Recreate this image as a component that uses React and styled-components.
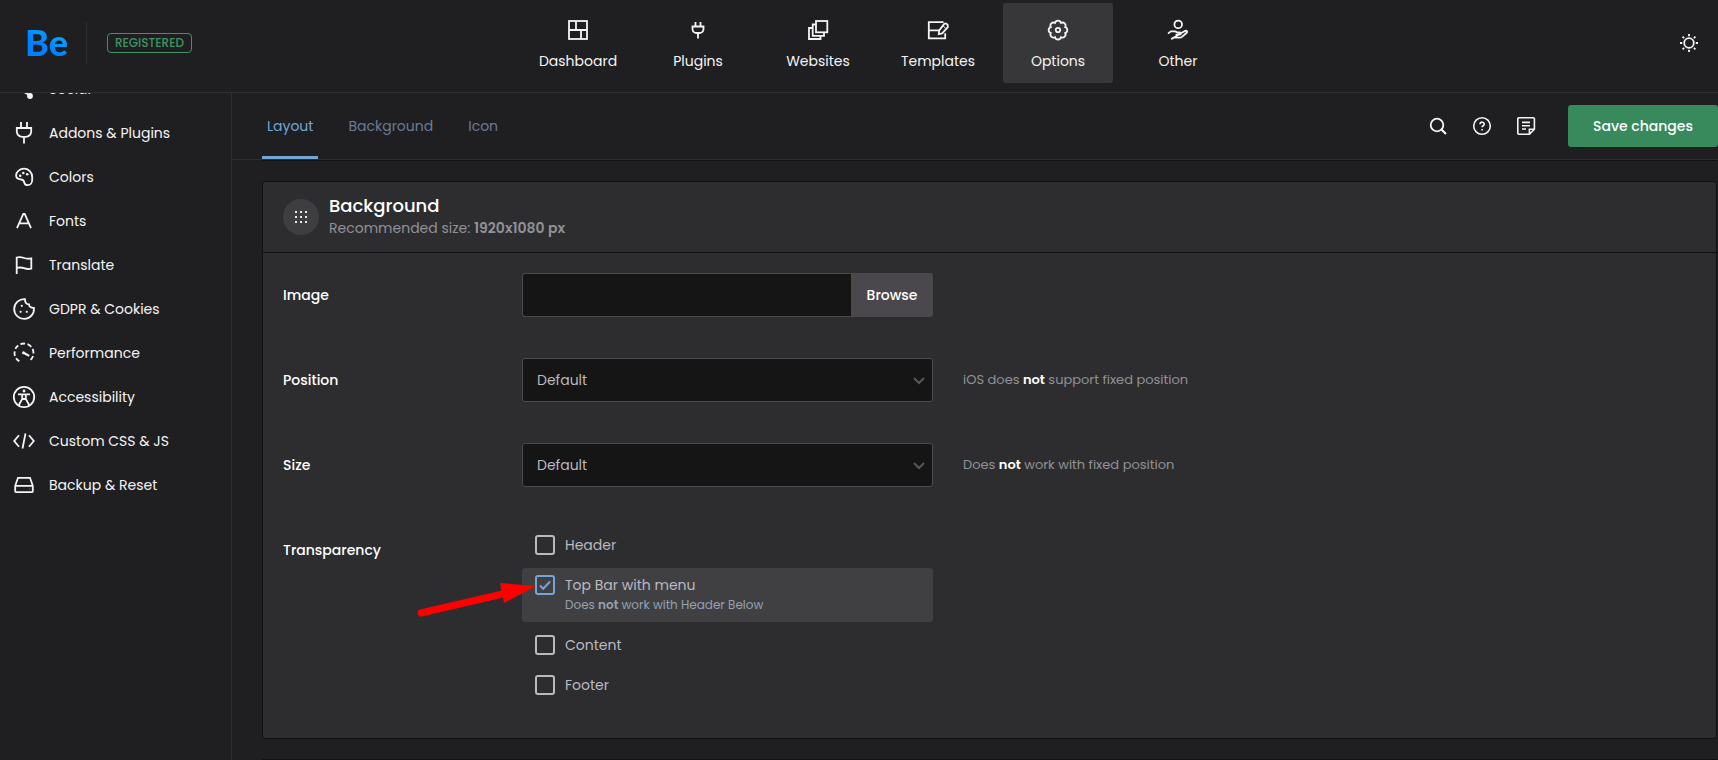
import React, { useState } from 'react';
import styled, { createGlobalStyle, css } from 'styled-components';

const GlobalStyle = createGlobalStyle`
	*,
	*::before,
	*::after {
		box-sizing: border-box;
	}
	body {
		margin: 0;
		background-color: #1f1f21;
		color: #f4f4f5;
		font-family: 'Poppins', 'Inter', sans-serif;
		font-size: 14px;
		line-height: 20px;
	}
	button,
	input,
	select {
		font: inherit;
	}
	h2,
	p,
	ul {
		margin: 0;
		padding: 0;
	}
`;

const icons = {
	dashboard: (
		<>
			<rect x='3' y='3' width='18' height='18' />
			<path d='M10 3v9M15 12v9M3 12h18' />
		</>
	),
	plugSmall: (
		<path d='M9.5 4v4M14.5 4v4M6.5 8.5h11v2.5a4 4 0 0 1-4 4h-3a4 4 0 0 1-4-4zM12 15v5.5' />
	),
	websites: (
		<>
			<rect x='10' y='3' width='11.3' height='11.3' />
			<path d='M10 6.5H6.7v11.3H18v-3.5M6.7 10H3v11h11.5v-3.2' />
		</>
	),
	templates: (
		<>
			<path d='M17.5 4.2H2.8v16.2h16.4v-5.2M2.8 12.3h10.5' />
			<path d='M18.4 5.6h2l1.4 1.6v2l-5.6 6.2-3.4.8.4-3.8z' />
			<path d='M16.8 7.6l2.8 2.6' strokeWidth='1' />
		</>
	),
	gear: (
		<>
			<path d='M9 4.900a3.100 3.100 0 0 1 6 0 3.100 3.100 0 0 1 4.200 4.200 3.100 3.100 0 0 1 0 5.900 3.100 3.100 0 0 1-4.200 4.200 3.100 3.100 0 0 1-6 0 3.100 3.100 0 0 1-4.200-4.200 3.100 3.100 0 0 1 0-5.900 3.100 3.100 0 0 1 4.200-4.200z' />
			<circle cx='12' cy='12' r='2.2' />
		</>
	),
	hand: (
		<>
			<circle cx='12.2' cy='6.4' r='3.8' />
			<path d='M2 15.6l2.9-2.2h4.4l2.2 1.1h2.200c1.600 0 1.600 2.200 0 2.200H9.600M14.800 15.200l4.400-2.300c1.700-.6 2.600.8 1.500 1.900l-5 4.300c-.6.5-1 .6-1.800.6H7.400l-2.200 1.600z' />
		</>
	),
	sun: (
		<>
			<circle cx='12' cy='12' r='4.8' />
			<path d='M12 3v2.200M12 18.800V21M3 12h2.200M18.800 12H21M5.600 5.600l1.500 1.500M16.900 16.900l1.500 1.500M5.600 18.400l1.500-1.500M16.900 7.100l1.500-1.500' />
		</>
	),
	search: (
		<>
			<circle cx='11' cy='11' r='6.3' />
			<path d='M15.5 15.5l4.5 4.5' strokeWidth='2.2' />
		</>
	),
	help: (
		<>
			<circle cx='12' cy='12' r='8.3' />
			<path d='M10 10.2c0-2.8 4.2-2.6 4.2 0 0 1.5-2.1 1.6-2.1 3.1M12.1 15v1.5' />
		</>
	),
	note: (
		<>
			<path d='M4.800 3.800h14.600a1 1 0 0 1 1 1v10.400l-5 5H4.800a1 1 0 0 1-1-1V4.800a1 1 0 0 1 1-1zM20.400 15.200h-5v5' />
			<path d='M8 8.4h8M8 11.800h8M8 15h4' />
		</>
	),
	share: (
		<>
			<path d='M7 12l11 6.5M7 12l11-6.5' />
			<circle cx='18' cy='19' r='2' fill='currentColor' />
			<circle cx='18' cy='5' r='2' fill='currentColor' />
			<circle cx='6' cy='12' r='2' fill='currentColor' />
		</>
	),
	plug: (
		<path d='M9 1v6M15 1v6M4.8 7h14.4v3.5a5.3 5.3 0 0 1-5.3 5.3h-3.8a5.3 5.3 0 0 1-5.3-5.3zM12 15.8v6.7' />
	),
	palette: (
		<>
			<path d='M12.5 3.7a8.2 8.2 0 0 1 7.7 8.3v2.7c0 3.3-2 5.5-4.5 5.5-2 0-3.1-1.1-3.5-3-.4-1.8-1.3-2.6-3.1-2.7-3-.2-5-1.2-5-3.9 0-4 3.800-7.100 8.400-6.900z' />
			<g fill='currentColor' stroke='none'>
				<circle cx='8.200' cy='10.800' r='1.300' />
				<circle cx='11.300' cy='8' r='1.300' />
				<circle cx='15.200' cy='9.200' r='1.300' />
			</g>
		</>
	),
	font: <path d='M5 19.2L11.3 5h1.4L19 19.2M7.5 14.3h9' />,
	flag: <path d='M4.7 21V4.5c2.8-.8 4.8-.4 7.3.5s4.7 1 7.3.4v10.3c-2.6.6-4.8.4-7.3-.5s-4.5-1-7.3-.2' />,
	cookie: (
		<>
			<path d='M13 2.2a9.9 9.9 0 1 0 8.9 8.6c-2.9.2-4.8-1-4.9-3.4-2.6 0-4.1-2-4-5.2z' />
			<g fill='currentColor' stroke='none'>
				<circle cx='9.800' cy='8.800' r='1.100' />
				<circle cx='8.600' cy='14.800' r='1.100' />
				<circle cx='14.800' cy='14.800' r='1.100' />
			</g>
		</>
	),
	gauge: (
		<>
			<path d='M7.4 20.3a9.500 9.500 0 1 1 9.200 0' strokeDasharray='4.6 2.5' />
			<path d='M12 12l5.2 2.9' strokeWidth='2.2' />
			<circle cx='11.5' cy='11.7' r='1.5' fill='currentColor' stroke='none' />
		</>
	),
	accessibility: (
		<>
			<circle cx='12' cy='12' r='10.2' />
			<circle cx='12' cy='6' r='1.4' fill='currentColor' stroke='none' />
			<path d='M6 9.3h12M10.2 9.5v4.5l-3.400 6M13.800 9.500v4.500l3.400 6M10.200 14h3.600' />
		</>
	),
	code: <path d='M7 6.2L2.2 12 7 17.8M17 6.2l4.8 5.8-4.8 5.8M13.5 4.5l-3 15' />,
	drive: (
		<>
			<path d='M6 4.8h12l2.8 8v5.4a1 1 0 0 1-1 1H4.2a1 1 0 0 1-1-1v-5.400zM3.200 12.800h17.600' />
			<path d='M17 16h.5' stroke='#5c7080' />
		</>
	),
};

function Icon({ name, size = 24, weight = 1.8 }) {
	return (
		<IconSvg
			width={size}
			height={size}
			viewBox='0 0 24 24'
			strokeWidth={weight}
			aria-hidden='true'>
			{icons[name]}
		</IconSvg>
	);
}

const mainNav = [
	{ label: 'Dashboard', icon: 'dashboard' },
	{ label: 'Plugins', icon: 'plugSmall' },
	{ label: 'Websites', icon: 'websites' },
	{ label: 'Templates', icon: 'templates' },
	{ label: 'Options', icon: 'gear', active: true },
	{ label: 'Other', icon: 'hand' },
];

const sideNav = [
	{ label: 'Social', icon: 'share' },
	{ label: 'Addons & Plugins', icon: 'plug' },
	{ label: 'Colors', icon: 'palette' },
	{ label: 'Fonts', icon: 'font' },
	{ label: 'Translate', icon: 'flag' },
	{ label: 'GDPR & Cookies', icon: 'cookie' },
	{ label: 'Performance', icon: 'gauge' },
	{ label: 'Accessibility', icon: 'accessibility' },
	{ label: 'Custom CSS & JS', icon: 'code' },
	{ label: 'Backup & Reset', icon: 'drive' },
];

const tabs = ['Layout', 'Background', 'Icon'];

function SelectField({ id }) {
	return (
		<SelectWrap>
			<Select id={id} defaultValue='default'>
				<option value='default'>Default</option>
			</Select>
			<Chevron width='12' height='8' viewBox='0 0 12 8' aria-hidden='true'>
				<path d='M1 1l5 5 5-5' />
			</Chevron>
		</SelectWrap>
	);
}

function CheckItem({ label, checked, onChange, note, children }) {
	return (
		<CheckRow $checked={checked}>
			<Checkbox type='checkbox' checked={checked} onChange={onChange} />
			<span>
				{label}
				{note && <CheckNote>{note}</CheckNote>}
			</span>
			{checked && (
				<Tick width='20' height='20' viewBox='0 0 20 20' aria-hidden='true'>
					<path d='M5 10.5l3.2 3.200 6.800-7.200' />
				</Tick>
			)}
			{children}
		</CheckRow>
	);
}

export default function App() {
	const [tab, setTab] = useState('Layout');
	const [transparency, setTransparency] = useState({ topBar: true });
	const toggle = (key) => () =>
		setTransparency({ ...transparency, [key]: !transparency[key] });

	return (
		<>
			<GlobalStyle />
			<Page>
				<Header>
					<Brand>
						<Logo href='#'>Be</Logo>
						<Divider />
						<Badge>REGISTERED</Badge>
					</Brand>
					<MainNav>
						{mainNav.map(({ label, icon, active }) => (
							<MainNavLink key={label} href='#' $active={active}>
								<Icon name={icon} />
								{label}
							</MainNavLink>
						))}
					</MainNav>
					<HeaderActions>
						<IconButton aria-label='Toggle light mode'>
							<Icon name='sun' />
						</IconButton>
					</HeaderActions>
				</Header>
				<Body>
					<Sidebar>
						<SideList>
							{sideNav.map(({ label, icon }) => (
								<li key={label}>
									<SideLink href='#'>
										<Icon name={icon} />
										{label}
									</SideLink>
								</li>
							))}
						</SideList>
					</Sidebar>
					<Main>
						<Toolbar>
							<Tabs>
								{tabs.map((name) => (
									<Tab
										key={name}
										$active={name === tab}
										onClick={() => setTab(name)}>
										{name}
									</Tab>
								))}
							</Tabs>
							<Tools>
								<IconButton aria-label='Search'>
									<Icon name='search' />
								</IconButton>
								<IconButton aria-label='Help'>
									<Icon name='help' weight={1.6} />
								</IconButton>
								<IconButton aria-label='Notes'>
									<Icon name='note' weight={1.6} />
								</IconButton>
							</Tools>
							<SaveButton>Save changes</SaveButton>
						</Toolbar>
						<Content>
							<CardEnd />
							<Card>
								<CardHeader>
									<CardIcon>
										<svg width='12' height='12' viewBox='0 0 12 12' fill='#e8e8ea'>
											{[0, 5, 10].map((y) =>
												[0, 5, 10].map((x) => (
													<rect key={`${x}-${y}`} x={x} y={y} width='2' height='2' />
												))
											)}
										</svg>
									</CardIcon>
									<div>
										<CardTitle>Background</CardTitle>
										<CardSub>
											Recommended size: <b>1920x1080 px</b>
										</CardSub>
									</div>
								</CardHeader>
								<Row>
									<Label htmlFor='image'>Image</Label>
									<FileField>
										<TextInput id='image' type='text' />
										<BrowseButton>Browse</BrowseButton>
									</FileField>
								</Row>
								<Row>
									<Label htmlFor='position'>Position</Label>
									<SelectField id='position' />
									<Hint>
										iOS does <b>not</b> support fixed position
									</Hint>
								</Row>
								<Row>
									<Label htmlFor='size'>Size</Label>
									<SelectField id='size' />
									<Hint>
										Does <b>not</b> work with fixed position
									</Hint>
								</Row>
								<Row>
									<Label as='span' id='transparency'>
										Transparency
									</Label>
									<CheckList role='group' aria-labelledby='transparency'>
										<CheckItem
											label='Header'
											checked={!!transparency.header}
											onChange={toggle('header')}
										/>
										<CheckItem
											label='Top Bar with menu'
											note={
												<>
													Does <b>not</b> work with Header Below
												</>
											}
											checked={!!transparency.topBar}
											onChange={toggle('topBar')}>
											<Arrow
												width='126'
												height='44'
												viewBox='0 0 126 44'
												aria-hidden='true'>
												<path
													d='M11 35l86-20'
													stroke='#f00'
													strokeWidth='7'
													strokeLinecap='round'
												/>
												<path d='M90 5l36 3-32 17z' fill='#f00' />
											</Arrow>
										</CheckItem>
										<CheckItem
											label='Content'
											checked={!!transparency.content}
											onChange={toggle('content')}
										/>
										<CheckItem
											label='Footer'
											checked={!!transparency.footer}
											onChange={toggle('footer')}
										/>
									</CheckList>
								</Row>
							</Card>
							<CardStart />
						</Content>
					</Main>
				</Body>
			</Page>
		</>
	);
}

const IconSvg = styled.svg`
	display: block;
	flex-shrink: 0;
	fill: none;
	stroke: currentColor;
`;

const Page = styled.div`
	display: flex;
	flex-direction: column;
	height: 100vh;
	overflow: hidden;
`;

const Header = styled.header`
	display: flex;
	align-items: flex-start;
	flex-shrink: 0;
	border-bottom: 1px solid #2e2e30;
`;

const Brand = styled.div`
	display: flex;
	align-items: center;
	flex: 0 0 232px;
	height: 86px;
	padding-left: 25px;
`;

const Logo = styled.a`
	padding-bottom: 2px;
	font-family: 'Lato', sans-serif;
	font-size: 36px;
	font-weight: 900;
	line-height: 40px;
	text-decoration: none;
	color: transparent;
	background: linear-gradient(30deg, #0080ff 40%, #0bb4ff 90%);
	background-clip: text;
`;

const Divider = styled.span`
	width: 1px;
	height: 42px;
	margin: 0 20px 0 18px;
	background-color: #2e2e30;
`;

const Badge = styled.span`
	padding: 0 7px;
	border: 1px solid #3f9464;
	border-radius: 4px;
	color: #3f9464;
	font-size: 12px;
	font-weight: 500;
	line-height: 18px;
`;

const MainNav = styled.nav`
	display: flex;
	justify-content: center;
	flex: 1;
	gap: 10px;
	padding: 3px 0 9px;
`;

const MainNavLink = styled.a`
	display: flex;
	flex-direction: column;
	align-items: center;
	gap: 9px;
	width: 110px;
	height: 80px;
	padding-top: 15px;
	border-radius: 3px;
	color: inherit;
	text-decoration: none;
	background-color: ${({ $active }) => ($active ? '#373739' : 'transparent')};
	&:hover {
		background-color: #373739;
	}
`;

const HeaderActions = styled.div`
	display: flex;
	align-items: center;
	justify-content: flex-end;
	flex: 0 0 194px;
	height: 86px;
	padding-right: 17px;
`;

const IconButton = styled.button`
	padding: 0;
	border: 0;
	background: none;
	color: inherit;
	cursor: pointer;
`;

const Body = styled.div`
	display: flex;
	flex: 1;
	min-height: 0;
`;

const Sidebar = styled.aside`
	flex: 0 0 232px;
	overflow: hidden;
	border-right: 1px solid #2e2e30;
`;

/* the list is scrolled a little under the header */
const SideList = styled.ul`
	margin-top: -26px;
	list-style: none;
`;

const SideLink = styled.a`
	display: flex;
	align-items: center;
	gap: 13px;
	height: 44px;
	padding: 0 12px;
	color: inherit;
	text-decoration: none;
`;

const Main = styled.main`
	display: flex;
	flex-direction: column;
	flex: 1;
	min-width: 0;
`;

const Toolbar = styled.div`
	display: flex;
	align-items: center;
	flex-shrink: 0;
	height: 67px;
	padding-left: 30px;
	border-bottom: 1px solid #2e2e30;
`;

const Tabs = styled.div`
	display: flex;
	align-self: stretch;
	gap: 25px;
	margin-right: auto;
`;

const Tab = styled.button`
	padding: 3px 5px 0;
	border: 0;
	border-bottom: 3px solid transparent;
	border-radius: 2px 2px 0 0;
	background: none;
	color: #6b7a99;
	cursor: pointer;
	${({ $active }) =>
		$active &&
		css`
			border-color: #72a5d8;
			color: #72a5d8;
		`}
`;

const Tools = styled.div`
	display: flex;
	gap: 20px;
	margin-right: 30px;
`;

const SaveButton = styled.button`
	width: 150px;
	height: 42px;
	border: 0;
	border-radius: 3px;
	background-color: #388a5c;
	color: #fff;
	font-weight: 500;
	cursor: pointer;
`;

const Content = styled.div`
	display: flex;
	flex-direction: column;
	gap: 20px;
	padding: 0 1px 0 30px;
	overflow: hidden;
`;

const CardEnd = styled.div`
	flex-shrink: 0;
	border-bottom: 1px solid #111112;
`;

const CardStart = styled.div`
	flex-shrink: 0;
	border-top: 1px solid #111112;
`;

const Card = styled.section`
	flex-shrink: 0;
	padding-bottom: 10px;
	border: 1px solid #111112;
	border-radius: 3px;
	background-color: #2d2d2f;
`;

const CardHeader = styled.div`
	display: flex;
	align-items: center;
	gap: 10px;
	padding: 13px 20px;
	border-bottom: 1px solid #111112;
`;

const CardIcon = styled.span`
	display: flex;
	align-items: center;
	justify-content: center;
	width: 36px;
	height: 36px;
	border-radius: 50%;
	background-color: #3e3e40;
`;

const CardTitle = styled.h2`
	color: #fff;
	font-size: 18px;
	font-weight: 500;
	line-height: 22px;
`;

const CardSub = styled.p`
	color: #919197;
	line-height: 22px;
	b {
		font-weight: 600;
	}
`;

const Row = styled.div`
	display: grid;
	grid-template-columns: 209px 411px 1fr;
	column-gap: 30px;
	padding: 20px;
	&:not(:last-child) {
		border-bottom: 1px solid #2b2b2d;
	}
`;

const Label = styled.label`
	color: #fff;
	font-weight: 500;
	line-height: 44px;
`;

const field = css`
	height: 44px;
	padding: 0 14px;
	border: 1px solid #4a4a4d;
	border-radius: 3px;
	background-color: #151515;
	color: #b9b9c0;
	outline: none;
`;

const FileField = styled.div`
	display: flex;
`;

const TextInput = styled.input`
	${field}
	flex: 1;
	min-width: 0;
	border-right: 0;
	border-radius: 3px 0 0 3px;
`;

const BrowseButton = styled.button`
	width: 82px;
	border: 0;
	border-radius: 0 3px 3px 0;
	background-color: #4b484d;
	color: #fff;
	font-weight: 500;
	cursor: pointer;
`;

const SelectWrap = styled.div`
	position: relative;
`;

const Select = styled.select`
	${field}
	display: block;
	width: 100%;
	appearance: none;
`;

const Chevron = styled.svg`
	position: absolute;
	top: 19px;
	right: 8px;
	fill: none;
	stroke: #58585b;
	stroke-width: 2;
	pointer-events: none;
`;

const Hint = styled.p`
	color: #919197;
	font-size: 13px;
	line-height: 44px;
	b {
		color: #fff;
		font-weight: 600;
	}
`;

const CheckList = styled.div`
	display: flex;
	flex-direction: column;
	gap: 6px;
	padding-bottom: 6px;
`;

const CheckRow = styled.label`
	position: relative;
	display: flex;
	align-items: flex-start;
	gap: 10px;
	padding: 7px 13px;
	border-radius: 3px;
	color: #b9b9c0;
	background-color: ${({ $checked }) => ($checked ? '#404042' : 'transparent')};
`;

const Checkbox = styled.input`
	appearance: none;
	width: 20px;
	height: 20px;
	margin: 0;
	border: 2px solid #b9b9c0;
	border-radius: 3px;
	&:checked {
		border-color: #72a5d8;
	}
`;

const Tick = styled.svg`
	position: absolute;
	top: 7px;
	left: 13px;
	fill: none;
	stroke: #72a5d8;
	stroke-width: 2;
	pointer-events: none;
`;

const CheckNote = styled.small`
	display: block;
	color: #94a0b3;
	font-size: 12px;
	b {
		font-weight: 600;
	}
`;

const Arrow = styled.svg`
	position: absolute;
	top: 10px;
	left: -112px;
	pointer-events: none;
`;
